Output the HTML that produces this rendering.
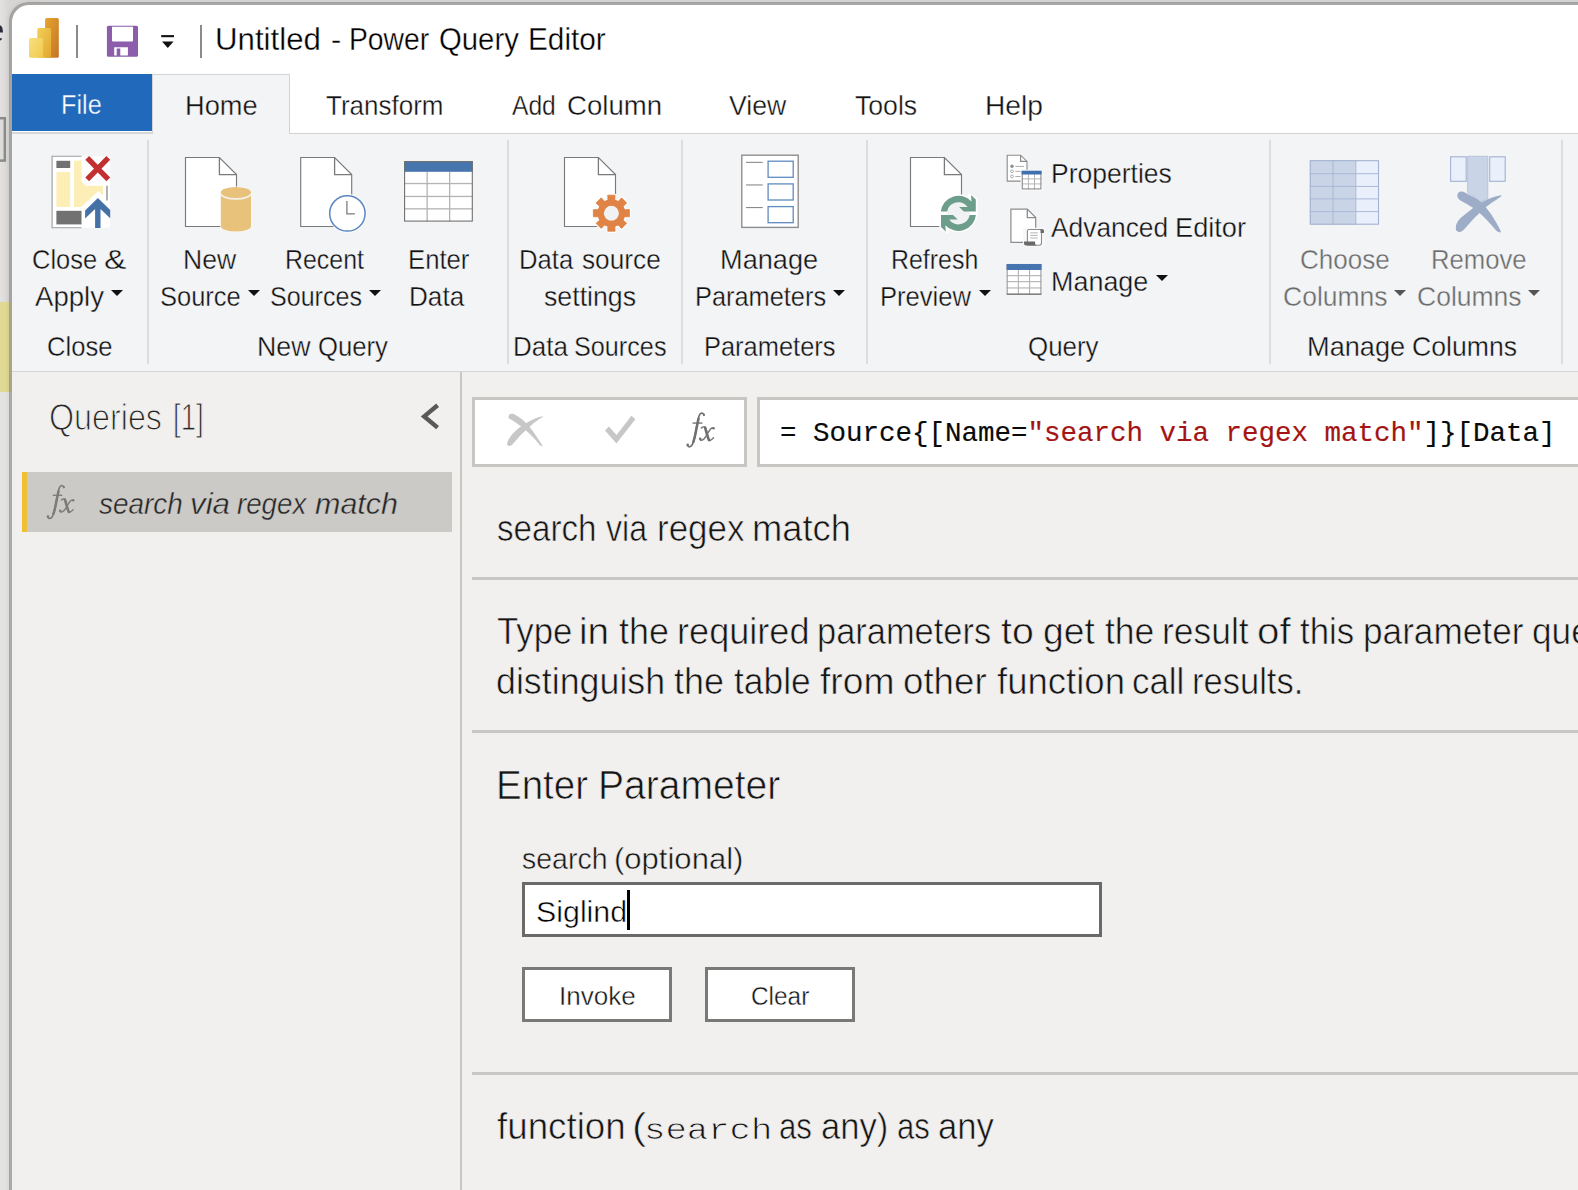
<!DOCTYPE html>
<html><head><meta charset="utf-8"><title>Untitled - Power Query Editor</title>
<style>
html,body{margin:0;padding:0;overflow:hidden;}
body{width:1578px;height:1190px;overflow:hidden;position:relative;background:#e2e2e1;font-family:"Liberation Sans",sans-serif;}
.a{position:absolute;}
.t{position:absolute;white-space:pre;line-height:1;transform-origin:0 0;font-family:"Liberation Sans",sans-serif;}
.sep{position:absolute;top:140px;height:224px;width:2px;background:#dcdddf;}
.hr{position:absolute;left:472px;width:1106px;height:3px;background:#c8c7c5;}
.arr{position:absolute;width:0;height:0;border-left:6px solid transparent;border-right:6px solid transparent;border-top:6px solid #111;}
svg{position:absolute;overflow:visible;}
</style></head>
<body>
<div class="a" style="left:0;top:0;width:1578px;height:1190px;overflow:hidden;background:#e2e2e1">
<!-- desktop strip behind window -->
<div class="a" style="left:0;top:0;width:1578px;height:8px;background:#dbdad9"></div>
<div class="a" style="left:0;top:0;width:40px;height:302px;background:linear-gradient(90deg,#e3e2e1 0,#d7d6d4 9px)"></div>

<div class="a" style="left:0;top:302px;width:12px;height:90px;background:#dfd993"></div>
<!-- window frame -->
<div class="a" style="left:9px;top:2px;width:1600px;height:1300px;background:#fff;border:3px solid rgba(120,120,120,0.52);background-clip:padding-box;border-radius:20px 0 0 0;box-sizing:border-box;box-shadow:0 0 5px rgba(0,0,0,0.09)"></div>
<!-- tab row -->
<div class="a" style="left:12px;top:74px;width:140px;height:57px;background:#2169ba"></div>
<div class="a" style="left:12px;top:132px;width:140px;height:2px;background:#d6d7d9"></div>
<div class="a" style="left:12px;top:134px;width:1566px;height:237px;background:#f3f4f6"></div>
<div class="a" style="left:152px;top:74px;width:138px;height:60px;background:#f3f4f6;border:1px solid #d3d3d3;border-bottom:none;box-sizing:border-box"></div>
<div class="a" style="left:289px;top:133px;width:1289px;height:1px;background:#d3d3d3"></div>
<!-- ribbon bottom border + body -->
<div class="a" style="left:12px;top:371px;width:1566px;height:1px;background:#d2d4d7"></div>
<div class="a" style="left:12px;top:372px;width:1566px;height:818px;background:#f1f0ee"></div>
<div class="a" style="left:460px;top:372px;width:2px;height:818px;background:#c9c7c4"></div>
<!-- ribbon separators -->
<div class="sep" style="left:147px"></div><div class="sep" style="left:507px"></div><div class="sep" style="left:681px"></div>
<div class="sep" style="left:866px"></div><div class="sep" style="left:1269px"></div><div class="sep" style="left:1561px"></div>
<!-- dropdown arrows -->
<div class="arr" style="left:111px;top:290px"></div><div class="arr" style="left:248px;top:290px"></div>
<div class="arr" style="left:369px;top:290px"></div><div class="arr" style="left:833px;top:290px"></div>
<div class="arr" style="left:979px;top:290px"></div><div class="arr" style="left:1156px;top:275px"></div>
<div class="arr" style="left:1394px;top:290px;border-top-color:#555"></div><div class="arr" style="left:1528px;top:290px;border-top-color:#555"></div>
<!-- queries pane -->
<div class="a" style="left:22px;top:472px;width:430px;height:60px;background:#cccac7"></div>
<div class="a" style="left:22px;top:472px;width:5px;height:60px;background:#efc035"></div>
<!-- formula bar -->
<div class="a" style="left:472px;top:397px;width:275px;height:70px;background:#fff;border:3px solid #c8c6c3;box-sizing:border-box"></div>
<div class="a" style="left:757px;top:397px;width:900px;height:70px;background:#fff;border:3px solid #c8c6c3;box-sizing:border-box"></div>
<!-- hr lines -->
<div class="hr" style="top:577px"></div><div class="hr" style="top:730px"></div><div class="hr" style="top:1072px"></div>
<!-- input + buttons -->
<div class="a" style="left:522px;top:882px;width:580px;height:55px;background:#fff;border:3px solid #696969;box-sizing:border-box"></div>
<div class="a" style="left:627px;top:890px;width:3px;height:40px;background:#000"></div>
<div class="a" style="left:522px;top:967px;width:150px;height:55px;background:#fff;border:3px solid #797977;box-sizing:border-box"></div>
<div class="a" style="left:705px;top:967px;width:150px;height:55px;background:#fff;border:3px solid #797977;box-sizing:border-box"></div>
<svg width="1578" height="1190" viewBox="0 0 1578 1190" style="left:0;top:0">
<defs>
<linearGradient id="g1" x1="0" y1="0" x2="1" y2="1"><stop offset="0" stop-color="#e6a52e"/><stop offset="1" stop-color="#c47425"/></linearGradient>
<linearGradient id="g2" x1="0" y1="0" x2="1" y2="1"><stop offset="0" stop-color="#f3d05a"/><stop offset="1" stop-color="#e3a52d"/></linearGradient>
<linearGradient id="g3" x1="0" y1="0" x2="1" y2="1"><stop offset="0" stop-color="#f7e07f"/><stop offset="1" stop-color="#f0ca4c"/></linearGradient>
</defs>
<rect x="-3" y="118.2" width="7.8" height="42.4" fill="#dddcda" stroke="#8b8b8a" stroke-width="2.5"/>
<path d="M0,25.4 C1.8,25.4 2.9,28 2.9,32.6 L0,32.6 Z" fill="#2b2b3c"/><path d="M0,38.3 L2,38.3 C2,39.8 1,40.4 0,40.4 Z" fill="#2b2b3c"/>
<rect x="45.1" y="18" width="13.7" height="39.8" rx="1.6" fill="url(#g1)"/>
<rect x="37.3" y="27.9" width="13.7" height="29.9" rx="1.6" fill="url(#g2)"/>
<rect x="29" y="38" width="13.9" height="19.8" rx="1.6" fill="url(#g3)"/>
<rect x="76" y="25" width="2" height="33" fill="#8a8a8a"/><rect x="200" y="25" width="2" height="33" fill="#8a8a8a"/>
<path d="M108.4,25.7 H136.5 Q138,25.7 138,27.2 V55.3 Q138,56.8 136.5,56.8 H108.4 Q106.9,56.8 106.9,55.3 V27.2 Q106.9,25.7 108.4,25.7 Z" fill="#8b5dab"/>
<path d="M112,26.7 H133 V40.6 Q133,41.6 132,41.6 H113 Q112,41.6 112,40.6 Z" fill="#fff"/>
<path d="M114.2,47.3 H127.9 V55.6 H120.3 V48.6 H116.7 V55.6 H114.2 Z" fill="#fff"/>
<rect x="161.2" y="35.1" width="12.8" height="2.1" fill="#111"/><path d="M162,41.4 H173.6 L167.8,48 Z" fill="#111"/>
<rect x="52.1" y="156.3" width="57.8" height="71.4" fill="#fff"/>
<path d="M81.5,156.3 H52.1 V227.7 H81.5" fill="none" stroke="#9c9c9c" stroke-width="1.1"/><path d="M107,185.7 V200.5" stroke="#909090" stroke-width="1.4"/>
<rect x="56.4" y="160.8" width="13.8" height="7.2" fill="#717171"/>
<rect x="56.4" y="172.1" width="13.8" height="34.8" fill="#fdeeb6"/>
<path d="M74.1,160.8 H81.5 V181.7 L85.5,185.7 H103 V195.5 L98.3,191 L81,206.9 H74.1 Z" fill="#fdeeb6"/>
<rect x="56.4" y="210.8" width="25.1" height="13.6" fill="#717171"/>
<path d="M87.2,157.9 L108.3,179.3 M108.3,157.9 L87.2,179.3" stroke="#c33032" stroke-width="5.4" fill="none"/>
<path d="M97.9,198.1 L110.2,210 V218.3 L100.5,208.9 V228 H95.1 V208.9 L85.1,218.6 V210.4 Z" fill="#4472a7"/>
<path d="M185.5,157.5 H219.4 L236.5,174.6 V226.5 H185.5 Z" fill="#fff" stroke="#7a7a7a" stroke-width="1.15"/>
<path d="M219.4,157.5 V174.6 H236.5" fill="none" stroke="#7a7a7a" stroke-width="1.3"/>
<path d="M220.2,192.3 a15.6,5.9 0 0 1 31.2,0 V226 a15.6,5.9 0 0 1 -31.2,0 Z" fill="#fff"/>
<path d="M220.8,192.3 a15.1,5.3 0 0 1 30.2,0 V226.2 a15.1,5.3 0 0 1 -30.2,0 Z" fill="#e8c27b"/>
<path d="M220.8,193.6 a15.1,5.3 0 0 0 30.2,0" fill="none" stroke="#f4f0e9" stroke-width="1.7"/>
<path d="M300.7,157.5 H334.6 L351.7,174.6 V226.5 H300.7 Z" fill="#fff" stroke="#7a7a7a" stroke-width="1.15"/>
<path d="M334.6,157.5 V174.6 H351.7" fill="none" stroke="#7a7a7a" stroke-width="1.3"/>
<circle cx="347.4" cy="213.4" r="19.3" fill="#fff"/><circle cx="347.4" cy="213.4" r="17.7" fill="#fff" stroke="#5b86c0" stroke-width="1.5"/>
<path d="M346.9,200.9 V213.9 H354.9" fill="none" stroke="#7d7d7d" stroke-width="1.3"/>
<rect x="404.1" y="161.1" width="68.7" height="60.5" fill="#fff"/>
<rect x="426.5" y="171.8" width="1.3" height="49.8" fill="#b4b4b4"/>
<rect x="449.0" y="171.8" width="1.3" height="49.8" fill="#b4b4b4"/>
<rect x="404.1" y="182.9" width="68.7" height="1.3" fill="#b4b4b4"/>
<rect x="404.1" y="195.8" width="68.7" height="1.3" fill="#b4b4b4"/>
<rect x="404.1" y="208.2" width="68.7" height="1.3" fill="#b4b4b4"/>
<rect x="404.1" y="161.1" width="68.7" height="10.7" fill="#4775ad"/>
<rect x="404.6" y="161.6" width="67.7" height="59.5" fill="none" stroke="#707070" stroke-width="1.1"/>
<path d="M564.5,157.5 H598.4 L615.5,174.6 V226.5 H564.5 Z" fill="#fff" stroke="#7a7a7a" stroke-width="1.15"/>
<path d="M598.4,157.5 V174.6 H615.5" fill="none" stroke="#7a7a7a" stroke-width="1.3"/>
<path d="M607.92,200.26 L607.75,195.16 L615.05,195.16 L614.88,200.26 L618.09,201.59 L621.57,197.87 L626.73,203.03 L623.01,206.51 L624.34,209.72 L629.44,209.55 L629.44,216.85 L624.34,216.68 L623.01,219.89 L626.73,223.37 L621.57,228.53 L618.09,224.81 L614.88,226.14 L615.05,231.24 L607.75,231.24 L607.92,226.14 L604.71,224.81 L601.23,228.53 L596.07,223.37 L599.79,219.89 L598.46,216.68 L593.36,216.85 L593.36,209.55 L598.46,209.72 L599.79,206.51 L596.07,203.03 L601.23,197.87 L604.71,201.59 Z" fill="#fff" stroke="#fff" stroke-width="3" stroke-linejoin="round"/>
<circle cx="611.4" cy="213.2" r="13.7" fill="#e08345"/>
<path d="M607.92,200.26 L607.75,195.16 L615.05,195.16 L614.88,200.26 L618.09,201.59 L621.57,197.87 L626.73,203.03 L623.01,206.51 L624.34,209.72 L629.44,209.55 L629.44,216.85 L624.34,216.68 L623.01,219.89 L626.73,223.37 L621.57,228.53 L618.09,224.81 L614.88,226.14 L615.05,231.24 L607.75,231.24 L607.92,226.14 L604.71,224.81 L601.23,228.53 L596.07,223.37 L599.79,219.89 L598.46,216.68 L593.36,216.85 L593.36,209.55 L598.46,209.72 L599.79,206.51 L596.07,203.03 L601.23,197.87 L604.71,201.59 Z" fill="#e08345" stroke="#e08345" stroke-width="0.8" stroke-linejoin="round"/>
<circle cx="611.4" cy="213.2" r="7.5" fill="#f1f2f4"/>
<rect x="741.8" y="155.2" width="56.4" height="72.2" fill="#fff" stroke="#8e8e8e" stroke-width="1.4"/>
<rect x="768.1" y="161.2" width="25.1" height="16.1" fill="#fff" stroke="#5f8bc0" stroke-width="1.3"/>
<rect x="746" y="161.8" width="16.7" height="1.1" fill="#8a8a8a"/>
<rect x="768.1" y="183.9" width="25.1" height="16.1" fill="#fff" stroke="#5f8bc0" stroke-width="1.3"/>
<rect x="746" y="184.4" width="16.7" height="1.1" fill="#8a8a8a"/>
<rect x="768.1" y="206.6" width="25.1" height="16.1" fill="#fff" stroke="#5f8bc0" stroke-width="1.3"/>
<rect x="746" y="207.0" width="16.7" height="1.1" fill="#8a8a8a"/>
<path d="M910.5,157.5 H944.4 L961.5,174.6 V226.5 H910.5 Z" fill="#fff" stroke="#7a7a7a" stroke-width="1.15"/>
<path d="M944.4,157.5 V174.6 H961.5" fill="none" stroke="#7a7a7a" stroke-width="1.3"/>
<circle cx="958.4" cy="213.3" r="19" fill="#fff"/><path d="M969,193 L977.5,198 V215 H958 Z" fill="#fff"/><path d="M947.8,233.7 L939.3,228.7 V211.7 H958 Z" fill="#fff"/>
<circle cx="958.4" cy="213.3" r="11.4" fill="#f1f2f4"/>
<path d="M940.89,211.60 A17.60,17.60 0 0 1 971.48,201.57 L971,194.9 L975.8,199.6 V211.60 H963.8 L959.1,207.1 H967.6 A11.40,11.40 0 0 0 947.14,211.60 Z" fill="#6d9d8b"/><path d="M940.89,211.60 A17.60,17.60 0 0 1 971.48,201.57 L971,194.9 L975.8,199.6 V211.60 H963.8 L959.1,207.1 H967.6 A11.40,11.40 0 0 0 947.14,211.60 Z" fill="#6d9d8b" transform="rotate(180 958.40 213.35)"/>
<path d="M1007.2,155.2 H1020.6 L1027,161.4 V181.1 H1007.2 Z" fill="#fff" stroke="#8c8c8c" stroke-width="1.1"/><path d="M1020.6,155.2 V161.4 H1027" fill="none" stroke="#8c8c8c" stroke-width="1.2"/>
<circle cx="1012" cy="166.3" r="1.7" fill="#8f8f8f"/><circle cx="1012" cy="171.3" r="1.4" fill="none" stroke="#9a9a9a" stroke-width="0.8"/><circle cx="1012" cy="176.4" r="1.4" fill="none" stroke="#9a9a9a" stroke-width="0.8"/>
<rect x="1015.3" y="165.9" width="8.7" height="0.9" fill="#a5a5a5"/>
<rect x="1015.3" y="170.9" width="8.7" height="0.9" fill="#a5a5a5"/>
<rect x="1015.3" y="176.0" width="8.7" height="0.9" fill="#a5a5a5"/>
<rect x="1020.6" y="169.7" width="22" height="21" fill="#f7f8f9"/>
<rect x="1021.8" y="170.9" width="19.6" height="18.5" fill="#fff"/>
<rect x="1027.9" y="174.3" width="1.0" height="15.1" fill="#b5b5b5"/>
<rect x="1034.0" y="174.3" width="1.0" height="15.1" fill="#b5b5b5"/>
<rect x="1021.8" y="178.4" width="19.6" height="1.0" fill="#b5b5b5"/>
<rect x="1021.8" y="183.4" width="19.6" height="1.0" fill="#b5b5b5"/>
<rect x="1021.8" y="170.9" width="19.6" height="3.4" fill="#3f6fae"/>
<rect x="1022.3" y="171.4" width="18.6" height="17.5" fill="none" stroke="#8c8c8c" stroke-width="1.1"/>
<rect x="1021.8" y="170.9" width="19.6" height="3.4" fill="#3f6fae"/>
<path d="M1010.9,209.2 H1027.3 L1035.7,217.6 V242.3 H1010.9 Z" fill="#fff" stroke="#8c8c8c" stroke-width="1.2"/><path d="M1027.3,209.2 V217.6 H1035.7" fill="none" stroke="#8c8c8c" stroke-width="1.3"/>
<rect x="1023" y="227.8" width="22" height="19" fill="#f7f8f9"/>
<path d="M1027.4,245 V231 Q1027.4,229.5 1029,229.5 H1041.5 V243 Q1041.5,245.2 1039,245.2 Z" fill="#fff" stroke="#8c8c8c" stroke-width="1.1"/>
<path d="M1040.5,229 H1042 Q1044,229 1044,231 V233 H1040.5 Z" fill="#6a6a6a"/>
<path d="M1024,241.4 H1035.1 V243.5 Q1035.1,245.6 1037.5,245.6 H1026 Q1024,245.6 1024,243.5 Z" fill="#6a6a6a"/>
<rect x="1030.3" y="232.3" width="7.5" height="1.1" fill="#bdbdbd"/>
<rect x="1030.3" y="234.9" width="7.5" height="1.1" fill="#bdbdbd"/>
<rect x="1030.3" y="237.5" width="7.5" height="1.1" fill="#bdbdbd"/>
<rect x="1006.7" y="264.0" width="34.7" height="30.7" fill="#fff"/>
<rect x="1017.8" y="269.9" width="1.1" height="24.8" fill="#b2b2b2"/>
<rect x="1029.0" y="269.9" width="1.1" height="24.8" fill="#b2b2b2"/>
<rect x="1006.7" y="275.1" width="34.7" height="1.1" fill="#b2b2b2"/>
<rect x="1006.7" y="281.1" width="34.7" height="1.1" fill="#b2b2b2"/>
<rect x="1006.7" y="287.4" width="34.7" height="1.1" fill="#b2b2b2"/>
<rect x="1006.7" y="264.0" width="34.7" height="5.9" fill="#4674ae"/>
<rect x="1007.2" y="264.5" width="33.7" height="29.7" fill="none" stroke="#9a9a9a" stroke-width="1.1"/>
<rect x="1006.7" y="264" width="34.7" height="5.9" fill="#4674ae"/><rect x="1006.7" y="293.6" width="34.7" height="1.1" fill="#6e6e6e"/>
<rect x="1309.8" y="160.2" width="46" height="64.5" fill="#c9d4e7"/><rect x="1355.8" y="160.2" width="23.2" height="64.5" fill="#e9f0fb"/>
<rect x="1332.5" y="160.2" width="1" height="64.5" fill="#aab8d6"/>
<rect x="1355.3" y="160.2" width="1" height="64.5" fill="#aab8d6"/>
<rect x="1309.8" y="173.2" width="69.2" height="1" fill="#aab8d6"/>
<rect x="1309.8" y="185.9" width="69.2" height="1" fill="#aab8d6"/>
<rect x="1309.8" y="198.4" width="69.2" height="1" fill="#aab8d6"/>
<rect x="1309.8" y="211.1" width="69.2" height="1" fill="#aab8d6"/>
<rect x="1310.3" y="160.7" width="68.2" height="63.5" fill="none" stroke="#a3b2d1" stroke-width="1.1"/>
<rect x="1450.6" y="156.8" width="15.6" height="24.5" fill="#e9f0fb" stroke="#a3b2d1" stroke-width="1.1"/><rect x="1489.7" y="156.8" width="15.5" height="24.5" fill="#e9f0fb" stroke="#a3b2d1" stroke-width="1.1"/>
<path d="M1467.6,156.3 H1487.8 V198.5 L1481,202 L1473,196 L1467.6,192.5 Z" fill="#c9d4e7" stroke="#b0bdd8" stroke-width="0.8"/>
<path d="M1457.41,196.41 C1457.19,195.26 1457.53,193.60 1458.31,192.78 C1459.10,191.96 1460.77,191.42 1462.10,191.49 C1463.42,191.57 1464.05,192.14 1466.26,193.23 C1468.46,194.33 1472.56,196.26 1475.33,198.08 C1478.11,199.89 1480.38,201.61 1482.90,204.13 C1485.42,206.65 1488.19,210.05 1490.46,213.20 C1492.73,216.36 1494.80,219.96 1496.51,223.04 C1498.23,226.11 1500.65,230.27 1500.75,231.66 C1500.85,233.05 1498.83,232.62 1497.12,231.36 C1495.40,230.10 1492.83,226.67 1490.46,224.10 C1488.09,221.52 1485.67,218.52 1482.90,215.93 C1480.13,213.33 1476.60,210.54 1473.82,208.51 C1471.05,206.48 1468.63,205.22 1466.26,203.75 C1463.89,202.27 1461.08,200.89 1459.60,199.66 C1458.13,198.44 1457.62,197.56 1457.41,196.41 Z" fill="#9eadc7"/>
<path d="M1455.89,228.33 C1455.92,227.20 1455.70,225.43 1456.57,223.64 C1457.44,221.85 1459.10,219.63 1461.11,217.59 C1463.13,215.55 1465.80,213.63 1468.68,211.39 C1471.55,209.14 1474.98,206.22 1478.36,204.13 C1481.74,202.03 1485.22,200.29 1488.95,198.83 C1492.68,197.37 1498.91,195.63 1500.75,195.35 C1502.59,195.08 1501.46,195.96 1499.99,197.17 C1498.53,198.38 1494.57,200.70 1491.98,202.61 C1489.38,204.53 1487.19,206.27 1484.41,208.67 C1481.64,211.06 1478.11,214.21 1475.33,216.99 C1472.56,219.76 1469.89,223.01 1467.77,225.31 C1465.65,227.60 1464.08,229.64 1462.63,230.75 C1461.18,231.86 1460.10,232.01 1459.07,231.96 C1458.04,231.91 1456.95,231.06 1456.42,230.45 C1455.89,229.85 1455.87,229.47 1455.89,228.33 Z" fill="#9eadc7"/>
<path d="M437.6,405.2 L424.2,416.4 L437.6,427.6" fill="none" stroke="#595959" stroke-width="4.4"/>
<path d="M508.61,417.18 C508.68,416.53 508.86,415.16 509.45,414.58 C510.05,414.00 511.17,413.64 512.18,413.70 C513.20,413.75 514.08,414.12 515.55,414.92 C517.02,415.71 519.26,417.09 521.01,418.45 C522.76,419.80 524.51,421.53 526.05,423.07 C527.59,424.61 528.78,425.87 530.25,427.69 C531.72,429.51 533.47,431.96 534.87,433.99 C536.27,436.02 537.38,437.90 538.66,439.87 C539.93,441.85 542.24,444.89 542.52,445.84 C542.80,446.79 541.26,446.26 540.34,445.55 C539.41,444.83 538.24,442.99 536.97,441.55 C535.71,440.12 534.10,438.33 532.77,436.93 C531.44,435.53 530.25,434.34 528.99,433.15 C527.73,431.96 526.61,430.98 525.21,429.79 C523.81,428.60 522.13,427.20 520.59,426.01 C519.05,424.82 517.51,423.70 515.97,422.65 C514.43,421.60 512.50,420.39 511.34,419.71 C510.19,419.02 509.49,418.95 509.03,418.53 C508.58,418.11 508.54,417.84 508.61,417.18 Z" fill="#c7c7c7"/>
<path d="M507.14,443.66 C507.21,442.92 507.42,441.90 507.98,440.71 C508.54,439.52 509.45,437.91 510.50,436.51 C511.55,435.11 512.89,433.71 514.29,432.31 C515.69,430.91 517.37,429.37 518.91,428.11 C520.45,426.85 521.92,425.80 523.53,424.75 C525.14,423.70 526.75,422.79 528.57,421.81 C530.39,420.83 532.63,419.67 534.45,418.87 C536.27,418.06 538.08,417.37 539.50,416.97 C540.91,416.58 542.52,416.41 542.94,416.51 C543.36,416.62 542.87,417.00 542.02,417.61 C541.16,418.21 539.29,419.15 537.82,420.13 C536.34,421.11 534.66,422.30 533.19,423.49 C531.72,424.68 530.32,426.08 528.99,427.27 C527.66,428.46 526.54,429.37 525.21,430.63 C523.88,431.89 522.41,433.36 521.01,434.83 C519.61,436.30 518.14,437.98 516.81,439.45 C515.48,440.92 514.01,442.64 513.03,443.66 C512.04,444.67 511.59,445.16 510.92,445.55 C510.26,445.93 509.59,446.04 509.03,445.97 C508.47,445.90 507.88,445.51 507.56,445.13 C507.25,444.74 507.07,444.39 507.14,443.66 Z" fill="#c7c7c7"/>
<path d="M605,430.5 L608.9,426.6 L616.6,435 L631.4,415.8 L635.4,419.2 L616.4,443.6 Z" fill="#c7c7c7"/>
<g transform="translate(680.00,405.00) scale(0.04202)" fill="none" stroke="#707070" stroke-linecap="round" stroke-linejoin="round">
<path d="M566,222 C528,168 474,190 452,270 C430,350 405,480 380,620 C355,760 322,900 282,958 C252,1000 212,1008 184,972" stroke-width="40"/>
<path d="M440,330 C420,420 398,520 378,630 C362,720 340,810 318,880" stroke-width="60"/>
<path d="M298,430 H533" stroke-width="32" stroke-linecap="butt"/>
<circle cx="570" cy="236" r="27" fill="#707070" stroke="none"/><circle cx="183" cy="950" r="31" fill="#707070" stroke="none"/>
<path d="M508,548 C545,512 598,505 618,560 C640,640 665,760 690,830 C700,858 730,850 798,780" stroke-width="32"/>
<path d="M596,535 C622,620 652,760 690,835" stroke-width="62" stroke-linecap="round"/>
<path d="M800,556 C745,520 700,600 650,690 C600,780 560,850 488,838" stroke-width="32"/>
<circle cx="798" cy="553" r="30" fill="#707070" stroke="none"/><circle cx="481" cy="806" r="32" fill="#707070" stroke="none"/>
</g>
<g transform="translate(40.45,477.63) scale(0.04105)" fill="none" stroke="#7b7b7b" stroke-linecap="round" stroke-linejoin="round">
<path d="M566,222 C528,168 474,190 452,270 C430,350 405,480 380,620 C355,760 322,900 282,958 C252,1000 212,1008 184,972" stroke-width="40"/>
<path d="M440,330 C420,420 398,520 378,630 C362,720 340,810 318,880" stroke-width="60"/>
<path d="M298,430 H533" stroke-width="32" stroke-linecap="butt"/>
<circle cx="570" cy="236" r="27" fill="#7b7b7b" stroke="none"/><circle cx="183" cy="950" r="31" fill="#7b7b7b" stroke="none"/>
<path d="M508,548 C545,512 598,505 618,560 C640,640 665,760 690,830 C700,858 730,850 798,780" stroke-width="32"/>
<path d="M596,535 C622,620 652,760 690,835" stroke-width="62" stroke-linecap="round"/>
<path d="M800,556 C745,520 700,600 650,690 C600,780 560,850 488,838" stroke-width="32"/>
<circle cx="798" cy="553" r="30" fill="#7b7b7b" stroke="none"/><circle cx="481" cy="806" r="32" fill="#7b7b7b" stroke="none"/>
</g>
</svg>
<span class="t" style="left:215.08px;top:24.00px;font-size:31.0px;color:#000;transform:scaleX(1.0079);-webkit-text-stroke:0.35px #fff">Untitled </span>
<span class="t" style="left:330.81px;top:24.00px;font-size:31.0px;color:#000;transform:scaleX(0.9875);-webkit-text-stroke:0.35px #fff">- </span>
<span class="t" style="left:348.57px;top:24.00px;font-size:31.0px;color:#000;transform:scaleX(0.9128);-webkit-text-stroke:0.35px #fff">Power </span>
<span class="t" style="left:438.65px;top:24.00px;font-size:31.0px;color:#000;transform:scaleX(0.9458);-webkit-text-stroke:0.35px #fff">Query </span>
<span class="t" style="left:528.18px;top:24.00px;font-size:31.0px;color:#000;transform:scaleX(0.9595);-webkit-text-stroke:0.35px #fff">Editor</span>
<span class="t" style="left:61.18px;top:91.00px;font-size:27.8px;color:#fff;transform:scaleX(0.9095);-webkit-text-stroke:0.35px #2169ba">File</span>
<span class="t" style="left:184.84px;top:92.00px;font-size:27.8px;color:#111;transform:scaleX(0.9789);-webkit-text-stroke:0.35px #f3f4f6">Home</span>
<span class="t" style="left:326.27px;top:92.00px;font-size:27.8px;color:#111;transform:scaleX(0.9350);-webkit-text-stroke:0.35px #fff">Transform</span>
<span class="t" style="left:512.20px;top:92.00px;font-size:27.8px;color:#111;transform:scaleX(0.8854);-webkit-text-stroke:0.35px #fff">Add </span>
<span class="t" style="left:567.01px;top:92.00px;font-size:27.8px;color:#111;transform:scaleX(0.9925);-webkit-text-stroke:0.35px #fff">Column</span>
<span class="t" style="left:729.00px;top:92.00px;font-size:27.8px;color:#111;transform:scaleX(0.9583);-webkit-text-stroke:0.35px #fff">View</span>
<span class="t" style="left:855.24px;top:92.00px;font-size:27.8px;color:#111;transform:scaleX(0.9571);-webkit-text-stroke:0.35px #fff">Tools</span>
<span class="t" style="left:985.27px;top:92.00px;font-size:27.8px;color:#111;transform:scaleX(1.0130);-webkit-text-stroke:0.35px #fff">Help</span>
<span class="t" style="left:32.07px;top:246.30px;font-size:27.4px;color:#111;transform:scaleX(0.9294);-webkit-text-stroke:0.35px #f3f4f6">Close </span>
<span class="t" style="left:104.08px;top:246.30px;font-size:27.4px;color:#111;transform:scaleX(1.2235);-webkit-text-stroke:0.35px #f3f4f6">&amp;</span>
<span class="t" style="left:35.40px;top:283.00px;font-size:27.4px;color:#111;transform:scaleX(1.0059);-webkit-text-stroke:0.35px #f3f4f6">Apply</span>
<span class="t" style="left:46.77px;top:333.00px;font-size:27.4px;color:#111;transform:scaleX(0.9338);-webkit-text-stroke:0.35px #f3f4f6">Close</span>
<span class="t" style="left:182.56px;top:246.30px;font-size:27.4px;color:#111;transform:scaleX(0.9698);-webkit-text-stroke:0.35px #f3f4f6">New</span>
<span class="t" style="left:159.84px;top:283.00px;font-size:27.4px;color:#111;transform:scaleX(0.9310);-webkit-text-stroke:0.35px #f3f4f6">Source</span>
<span class="t" style="left:285.48px;top:246.30px;font-size:27.4px;color:#111;transform:scaleX(0.9094);-webkit-text-stroke:0.35px #f3f4f6">Recent</span>
<span class="t" style="left:269.77px;top:283.00px;font-size:27.4px;color:#111;transform:scaleX(0.9153);-webkit-text-stroke:0.35px #f3f4f6">Sources</span>
<span class="t" style="left:407.82px;top:246.30px;font-size:27.4px;color:#111;transform:scaleX(0.9381);-webkit-text-stroke:0.35px #f3f4f6">Enter</span>
<span class="t" style="left:409.49px;top:283.00px;font-size:27.4px;color:#111;transform:scaleX(0.9536);-webkit-text-stroke:0.35px #f3f4f6">Data</span>
<span class="t" style="left:256.75px;top:333.00px;font-size:27.4px;color:#111;transform:scaleX(0.9755);-webkit-text-stroke:0.35px #f3f4f6">New </span>
<span class="t" style="left:317.96px;top:333.00px;font-size:27.4px;color:#111;transform:scaleX(0.9378);-webkit-text-stroke:0.35px #f3f4f6">Query</span>
<span class="t" style="left:519.33px;top:246.30px;font-size:27.4px;color:#111;transform:scaleX(0.9357);-webkit-text-stroke:0.35px #f3f4f6">Data </span>
<span class="t" style="left:581.74px;top:246.30px;font-size:27.4px;color:#111;transform:scaleX(0.9575);-webkit-text-stroke:0.35px #f3f4f6">source</span>
<span class="t" style="left:543.82px;top:283.00px;font-size:27.4px;color:#111;transform:scaleX(0.9753);-webkit-text-stroke:0.35px #f3f4f6">settings</span>
<span class="t" style="left:512.60px;top:333.00px;font-size:27.4px;color:#111;transform:scaleX(0.9482);-webkit-text-stroke:0.35px #f3f4f6">Data </span>
<span class="t" style="left:574.36px;top:333.00px;font-size:27.4px;color:#111;transform:scaleX(0.9204);-webkit-text-stroke:0.35px #f3f4f6">Sources</span>
<span class="t" style="left:720.42px;top:246.30px;font-size:27.4px;color:#111;transform:scaleX(0.9917);-webkit-text-stroke:0.35px #f3f4f6">Manage</span>
<span class="t" style="left:694.65px;top:283.00px;font-size:27.4px;color:#111;transform:scaleX(0.9259);-webkit-text-stroke:0.35px #f3f4f6">Parameters</span>
<span class="t" style="left:704.34px;top:333.00px;font-size:27.4px;color:#111;transform:scaleX(0.9288);-webkit-text-stroke:0.35px #f3f4f6">Parameters</span>
<span class="t" style="left:891.48px;top:246.30px;font-size:27.4px;color:#111;transform:scaleX(0.9098);-webkit-text-stroke:0.35px #f3f4f6">Refresh</span>
<span class="t" style="left:879.73px;top:283.00px;font-size:27.4px;color:#111;transform:scaleX(0.9344);-webkit-text-stroke:0.35px #f3f4f6">Preview</span>
<span class="t" style="left:1050.57px;top:160.40px;font-size:27.4px;color:#111;transform:scaleX(0.9672);-webkit-text-stroke:0.35px #f3f4f6">Properties</span>
<span class="t" style="left:1051.40px;top:214.20px;font-size:27.4px;color:#111;transform:scaleX(0.9617);-webkit-text-stroke:0.35px #f3f4f6">Advanced </span>
<span class="t" style="left:1174.81px;top:214.20px;font-size:27.4px;color:#111;transform:scaleX(0.9928);-webkit-text-stroke:0.35px #f3f4f6">Editor</span>
<span class="t" style="left:1050.53px;top:268.20px;font-size:27.4px;color:#111;transform:scaleX(0.9833);-webkit-text-stroke:0.35px #f3f4f6">Manage</span>
<span class="t" style="left:1028.45px;top:333.00px;font-size:27.4px;color:#111;transform:scaleX(0.9459);-webkit-text-stroke:0.35px #f3f4f6">Query</span>
<span class="t" style="left:1299.95px;top:246.30px;font-size:27.4px;color:#6b6b6b;transform:scaleX(0.9500);-webkit-text-stroke:0.35px #f3f4f6">Choose</span>
<span class="t" style="left:1282.83px;top:283.00px;font-size:27.4px;color:#6b6b6b;transform:scaleX(0.9679);-webkit-text-stroke:0.35px #f3f4f6">Columns</span>
<span class="t" style="left:1430.53px;top:246.30px;font-size:27.4px;color:#6b6b6b;transform:scaleX(0.9374);-webkit-text-stroke:0.35px #f3f4f6">Remove</span>
<span class="t" style="left:1416.93px;top:283.00px;font-size:27.4px;color:#6b6b6b;transform:scaleX(0.9679);-webkit-text-stroke:0.35px #f3f4f6">Columns</span>
<span class="t" style="left:1307.02px;top:333.00px;font-size:27.4px;color:#111;transform:scaleX(0.9917);-webkit-text-stroke:0.35px #f3f4f6">Manage </span>
<span class="t" style="left:1411.73px;top:333.00px;font-size:27.4px;color:#111;transform:scaleX(0.9717);-webkit-text-stroke:0.35px #f3f4f6">Columns</span>
<span class="t" style="left:49.16px;top:398.90px;font-size:37.0px;color:#262626;transform:scaleX(0.8722);-webkit-text-stroke:1.1px #f1f0ee">Queries </span>
<span class="t" style="left:172.56px;top:398.90px;font-size:37.0px;color:#262626;transform:scaleX(0.7457);-webkit-text-stroke:1.1px #f1f0ee">[1]</span>
<span class="t" style="left:99.38px;top:488.80px;font-size:30.3px;color:#262626;transform:scaleX(0.9202);font-style:italic;-webkit-text-stroke:0.45px #cccac7">search </span>
<span class="t" style="left:189.63px;top:488.80px;font-size:30.3px;color:#262626;transform:scaleX(1.0333);font-style:italic;-webkit-text-stroke:0.45px #cccac7">via </span>
<span class="t" style="left:236.99px;top:488.80px;font-size:30.3px;color:#262626;transform:scaleX(0.9133);font-style:italic;-webkit-text-stroke:0.45px #cccac7">regex </span>
<span class="t" style="left:314.89px;top:488.80px;font-size:30.3px;color:#262626;transform:scaleX(1.0063);font-style:italic;-webkit-text-stroke:0.45px #cccac7">match</span>
<span class="t" style="left:779.84px;top:420.40px;font-size:28.5px;color:#0a0a0a;transform:scaleX(0.9647);font-family:'Liberation Mono', monospace;-webkit-text-stroke:0.18px">= Source{[Name=<span style="color:#a31515">"search via regex match"</span>]}[Data]</span>
<span class="t" style="left:497.38px;top:511.00px;font-size:36.2px;color:#151515;transform:scaleX(0.9162);-webkit-text-stroke:0.6px #f1f0ee">search </span>
<span class="t" style="left:606.21px;top:511.00px;font-size:36.2px;color:#151515;transform:scaleX(0.8867);-webkit-text-stroke:0.6px #f1f0ee">via </span>
<span class="t" style="left:656.90px;top:511.00px;font-size:36.2px;color:#151515;transform:scaleX(0.9667);-webkit-text-stroke:0.6px #f1f0ee">regex </span>
<span class="t" style="left:752.19px;top:511.00px;font-size:36.2px;color:#151515;transform:scaleX(1.0043);-webkit-text-stroke:0.6px #f1f0ee">match</span>
<span class="t" style="left:496.64px;top:613.90px;font-size:36.2px;color:#151515;transform:scaleX(0.9605);-webkit-text-stroke:0.6px #f1f0ee">Type </span>
<span class="t" style="left:579.29px;top:613.90px;font-size:36.2px;color:#151515;transform:scaleX(1.0696);-webkit-text-stroke:0.6px #f1f0ee">in </span>
<span class="t" style="left:618.81px;top:613.90px;font-size:36.2px;color:#151515;transform:scaleX(0.9917);-webkit-text-stroke:0.6px #f1f0ee">the </span>
<span class="t" style="left:677.10px;top:613.90px;font-size:36.2px;color:#151515;transform:scaleX(0.9984);-webkit-text-stroke:0.6px #f1f0ee">required </span>
<span class="t" style="left:817.45px;top:613.90px;font-size:36.2px;color:#151515;transform:scaleX(0.9514);-webkit-text-stroke:0.6px #f1f0ee">parameters </span>
<span class="t" style="left:1001.21px;top:613.90px;font-size:36.2px;color:#151515;transform:scaleX(1.0857);-webkit-text-stroke:0.6px #f1f0ee">to </span>
<span class="t" style="left:1042.54px;top:613.90px;font-size:36.2px;color:#151515;transform:scaleX(1.0292);-webkit-text-stroke:0.6px #f1f0ee">get </span>
<span class="t" style="left:1105.02px;top:613.90px;font-size:36.2px;color:#151515;transform:scaleX(0.9812);-webkit-text-stroke:0.6px #f1f0ee">the </span>
<span class="t" style="left:1162.26px;top:613.90px;font-size:36.2px;color:#151515;transform:scaleX(0.9788);-webkit-text-stroke:0.6px #f1f0ee">result </span>
<span class="t" style="left:1257.27px;top:613.90px;font-size:36.2px;color:#151515;transform:scaleX(1.1143);-webkit-text-stroke:0.6px #f1f0ee">of </span>
<span class="t" style="left:1299.84px;top:613.90px;font-size:36.2px;color:#151515;transform:scaleX(0.9630);-webkit-text-stroke:0.6px #f1f0ee">this </span>
<span class="t" style="left:1362.58px;top:613.90px;font-size:36.2px;color:#151515;transform:scaleX(0.9727);-webkit-text-stroke:0.6px #f1f0ee">parameter </span>
<span class="t" style="left:1532.05px;top:613.90px;font-size:36.2px;color:#151515;transform:scaleX(0.9727);-webkit-text-stroke:0.6px #f1f0ee">query.</span>
<span class="t" style="left:496.42px;top:663.70px;font-size:36.2px;color:#151515;transform:scaleX(0.9892);-webkit-text-stroke:0.6px #f1f0ee">distinguish </span>
<span class="t" style="left:674.01px;top:663.70px;font-size:36.2px;color:#151515;transform:scaleX(0.9938);-webkit-text-stroke:0.6px #f1f0ee">the </span>
<span class="t" style="left:733.62px;top:663.70px;font-size:36.2px;color:#151515;transform:scaleX(0.9776);-webkit-text-stroke:0.6px #f1f0ee">table </span>
<span class="t" style="left:820.47px;top:663.70px;font-size:36.2px;color:#151515;transform:scaleX(1.0290);-webkit-text-stroke:0.6px #f1f0ee">from </span>
<span class="t" style="left:903.17px;top:663.70px;font-size:36.2px;color:#151515;transform:scaleX(1.0137);-webkit-text-stroke:0.6px #f1f0ee">other </span>
<span class="t" style="left:996.69px;top:663.70px;font-size:36.2px;color:#151515;transform:scaleX(1.0098);-webkit-text-stroke:0.6px #f1f0ee">function </span>
<span class="t" style="left:1132.17px;top:663.70px;font-size:36.2px;color:#151515;transform:scaleX(0.9640);-webkit-text-stroke:0.6px #f1f0ee">call </span>
<span class="t" style="left:1192.24px;top:663.70px;font-size:36.2px;color:#151515;transform:scaleX(0.9545);-webkit-text-stroke:0.6px #f1f0ee">results.</span>
<span class="t" style="left:496.22px;top:765.20px;font-size:40.8px;color:#151515;transform:scaleX(0.9441);-webkit-text-stroke:0.7px #f1f0ee">Enter </span>
<span class="t" style="left:597.67px;top:765.20px;font-size:40.8px;color:#151515;transform:scaleX(0.9570);-webkit-text-stroke:0.7px #f1f0ee">Parameter</span>
<span class="t" style="left:522.06px;top:843.70px;font-size:30.3px;color:#151515;transform:scaleX(0.9409);-webkit-text-stroke:0.5px #f1f0ee">search </span>
<span class="t" style="left:613.75px;top:843.70px;font-size:30.3px;color:#151515;transform:scaleX(1.0244);-webkit-text-stroke:0.5px #f1f0ee">(optional)</span>
<span class="t" style="left:536.20px;top:895.70px;font-size:30.4px;color:#000;transform:scaleX(0.9989);-webkit-text-stroke:0.5px #fff">Siglind</span>
<span class="t" style="left:558.85px;top:983.20px;font-size:26.7px;color:#151515;transform:scaleX(0.9773);-webkit-text-stroke:0.4px #fff">Invoke</span>
<span class="t" style="left:750.99px;top:983.20px;font-size:26.7px;color:#151515;transform:scaleX(0.9143);-webkit-text-stroke:0.4px #fff">Clear</span>
<span class="t" style="left:497.28px;top:1108.90px;font-size:36.2px;color:#151515;transform:scaleX(1.0154);-webkit-text-stroke:0.6px #f1f0ee">function </span>
<span class="t" style="left:631.54px;top:1108.90px;font-size:36.2px;color:#151515;transform:scaleX(1.1778);-webkit-text-stroke:0.6px #f1f0ee">(</span>
<span class="t" style="left:644.24px;top:1116.00px;font-size:30px;color:#111;transform:scaleX(1.1882);font-family:'Liberation Mono', monospace;-webkit-text-stroke:0.75px #f1f0ee">search</span>
<span class="t" style="left:779.37px;top:1108.90px;font-size:36.2px;color:#151515;transform:scaleX(0.8629);-webkit-text-stroke:0.6px #f1f0ee">as </span>
<span class="t" style="left:820.79px;top:1108.90px;font-size:36.2px;color:#151515;transform:scaleX(0.9561);-webkit-text-stroke:0.6px #f1f0ee">any) </span>
<span class="t" style="left:896.58px;top:1108.90px;font-size:36.2px;color:#151515;transform:scaleX(0.8600);-webkit-text-stroke:0.6px #f1f0ee">as </span>
<span class="t" style="left:937.89px;top:1108.90px;font-size:36.2px;color:#151515;transform:scaleX(0.9571);-webkit-text-stroke:0.6px #f1f0ee">any</span>
</div>
</body></html>
